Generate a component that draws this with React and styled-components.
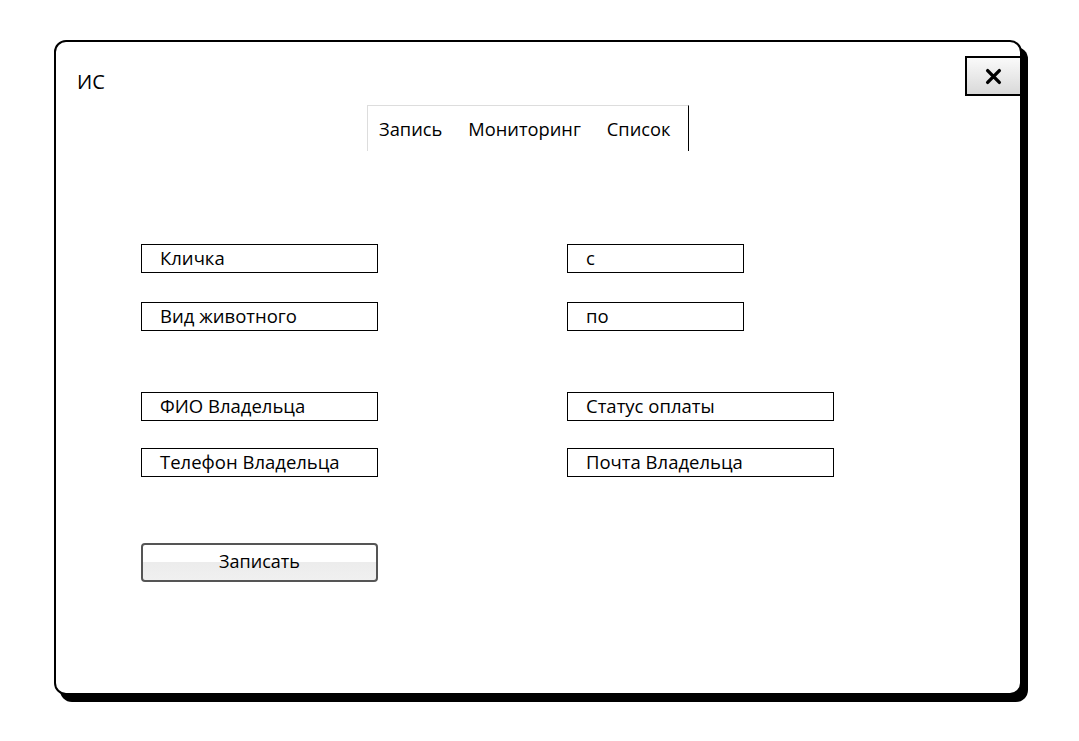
import React from "react";
import styled, { createGlobalStyle } from "styled-components";

const Global = createGlobalStyle`
  html, body { margin: 0; padding: 0; background: #fff; }
  body { font-family: "Open Sans", "Noto Sans", sans-serif; color: #000; }
`;

const Page = styled.div`
  width: 1079px;
  height: 741px;
  padding: 40px 0 0 54px;
  box-sizing: border-box;
`;

const Window = styled.div`
  position: relative;
  width: 968px;
  height: 655px;
  box-sizing: border-box;
  border: 2px solid #000;
  border-radius: 12px;
  box-shadow: 6px 7px 0 #000;
  background: #fff;
  display: flex;
  flex-direction: column;
`;

const CloseButton = styled.button`
  position: absolute;
  top: 14px;
  right: -2px;
  width: 57px;
  height: 40px;
  box-sizing: border-box;
  border: 2px solid #000;
  background: linear-gradient(#fafafa, #d9d9d9);
  display: flex;
  align-items: center;
  justify-content: center;
  padding: 0;
  cursor: pointer;
`;

const Title = styled.div`
  margin: 28px 0 0 21px;
  font-size: 20px;
  line-height: 24px;
  height: 24px;
`;

const Tabs = styled.div`
  margin: 11px 0 0 311px;
  width: 322px;
  height: 46px;
  box-sizing: border-box;
  border-top: 1px solid #ddd;
  border-left: 1px solid #ddd;
  border-right: 1px solid #000;
  display: flex;
  align-items: center;
  padding-left: 11px;
  gap: 26px;
`;

const Tab = styled.span`
  font-size: 18.3px;
  line-height: 20px;
`;

const Form = styled.div`
  margin: 0 0 0 85px;
  display: flex;
  flex-direction: column;
`;

const Row = styled.div`
  display: flex;
  gap: 189px;
  margin-top: ${(p) => p.$top}px;
`;

const Field = styled.div`
  width: ${(p) => p.$w}px;
  height: 29px;
  box-sizing: border-box;
  border: 1px solid #000;
  padding-left: 18px;
  font-size: 18.5px;
  line-height: 26px;
  white-space: nowrap;
`;

const Submit = styled.button`
  margin-top: ${(p) => p.$top}px;
  width: 237px;
  height: 39px;
  box-sizing: border-box;
  border: 2px solid #555;
  border-radius: 4px;
  background: linear-gradient(#fff 0%, #fff 50%, #ececec 50%, #f0f0f0 100%);
  font-family: "Open Sans", "Noto Sans", sans-serif;
  font-size: 18px;
  color: #000;
  padding: 0 0 3px 0;
  cursor: pointer;
`;

const XIcon = () => (
  <svg width="17" height="17" viewBox="0 0 16 16">
    <path d="M2.5 2.5 L13.5 13.5 M13.5 2.5 L2.5 13.5" stroke="#000" strokeWidth="3.2" strokeLinecap="round" />
  </svg>
);

export default function App() {
  return (
    <>
      <Global />
      <Page>
        <Window>
          <CloseButton aria-label="close">
            <XIcon />
          </CloseButton>
          <Title>ИС</Title>
          <Tabs>
            <Tab>Запись</Tab>
            <Tab>Мониторинг</Tab>
            <Tab>Список</Tab>
          </Tabs>
          <Form>
            <Row $top={93}>
              <Field $w={237}>Кличка</Field>
              <Field $w={177}>с</Field>
            </Row>
            <Row $top={29}>
              <Field $w={237}>Вид животного</Field>
              <Field $w={177}>по</Field>
            </Row>
            <Row $top={61}>
              <Field $w={237}>ФИО Владельца</Field>
              <Field $w={267}>Статус оплаты</Field>
            </Row>
            <Row $top={27}>
              <Field $w={237}>Телефон Владельца</Field>
              <Field $w={267}>Почта Владельца</Field>
            </Row>
            <Submit $top={66}>Записать</Submit>
          </Form>
        </Window>
      </Page>
    </>
  );
}
